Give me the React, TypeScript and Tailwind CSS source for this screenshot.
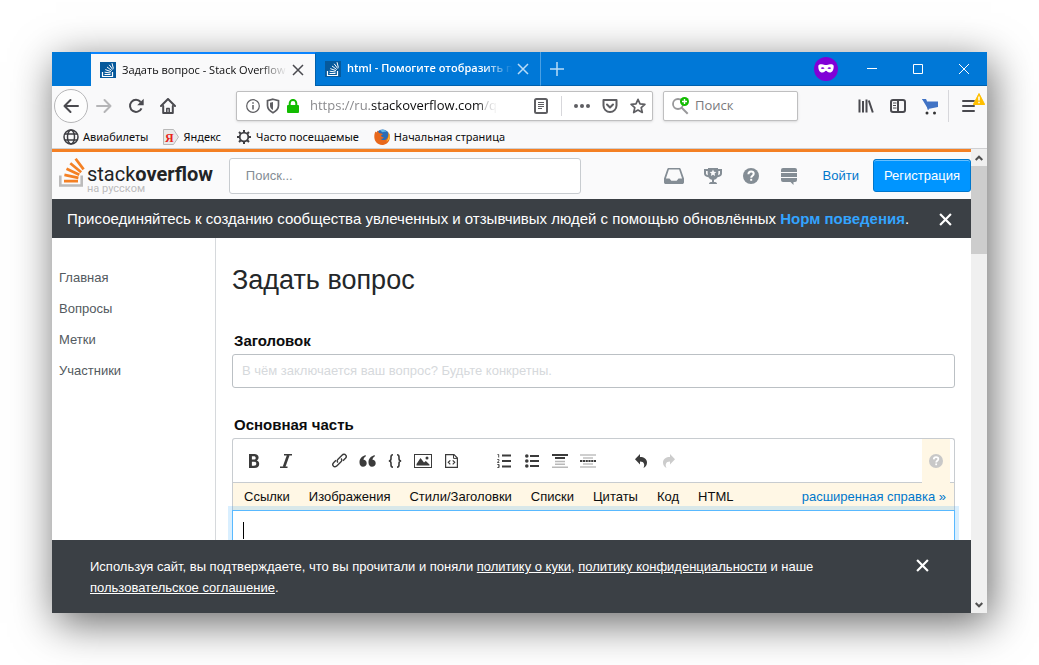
import type { ReactNode } from 'react';

const FlowMark = ({ className }: { className: string }) => (
    <svg viewBox="0 0 16 16" className={className} aria-hidden="true">
        <rect width="16" height="16" fill="#06599c" />
        <g fill="none" stroke="#fff" strokeWidth="1">
            <path d="M2.5 10v4.5h10V10" strokeWidth="1.2" />
            <path d="M4.5 12.5h6M4.6 10.2l6 .8M5.3 7.6l5.6 2M7 5l4.8 3.6M9.2 2.8l3.6 4.8M12 1.2l1.4 5.4" />
        </g>
    </svg>
);

const Logo = () => (
    <a href="#" className="flex shrink-0 items-start self-start pt-[5px]">
        <svg width="26" height="32" viewBox="0 0 26 32" aria-hidden="true">
            <path d="M1.300 18.500v10h21.400v-10" fill="none" stroke="#bcbbbb" strokeWidth="2.600" />
            <g stroke="#f48024" strokeWidth="2.700">
                <path d="M5 24.200h14M5.400 17.900l14 3M7.500 11.800l12.800 6M11.300 6.200l10.900 9M16.600 1.800l8 10.600" />
            </g>
        </svg>
        <span className="flex flex-col pl-0.5 pt-[7px] font-['Roboto',sans-serif]">
            <span className="text-[20px] leading-5 text-[#222426]">
                <span className="font-normal">stack</span>
                <span className="font-bold">overflow</span>
            </span>
            <span className="text-[11px] leading-[10px] text-[#bcbbbb]">на русском</span>
        </span>
    </a>
);

const Cross = ({ size, width = 1.5 }: { size: number; width?: number }) => (
    <svg width={size} height={size} viewBox="0 0 12 12" fill="none" stroke="currentColor" strokeWidth={width} aria-hidden="true">
        <path d="M1 1l10 10M11 1L1 11" />
    </svg>
);

const NavButton = ({ label, children }: { label: string; children: ReactNode }) => (
    <button aria-label={label} className="flex h-8 w-8 shrink-0 items-center justify-center text-[#4a4a4f]">
        {children}
    </button>
);

const TabStrip = () => (
    <div className="flex h-[34px] items-stretch bg-[#0078d7] pl-[39px] text-[11px]">
        <div className="flex w-[225px] items-center border-r border-t-2 border-[#0060ac] border-t-[#0a84ff] bg-[#f9f9fa] pl-[9px] text-[#0c0c0d]">
            <FlowMark className="mr-1.5 size-4 shrink-0" />
            <span className="w-[165px] overflow-hidden whitespace-nowrap [mask-image:linear-gradient(to_left,transparent,black_28px)]">
                Задать вопрос - Stack Overflow
            </span>
            <button aria-label="Закрыть вкладку" className="ml-[5px] text-[#4a4a4f]">
                <Cross size={12} />
            </button>
        </div>
        <div className="flex w-[225px] items-center border-r border-b border-r-[#4ba0e3] border-b-[#0060ac] pl-[9px] text-white">
            <FlowMark className="mr-1.5 size-4 shrink-0" />
            <span className="w-[165px] overflow-hidden whitespace-nowrap font-semibold [mask-image:linear-gradient(to_left,transparent,black_28px)]">
                html - Помогите отобразить по
            </span>
            <button aria-label="Закрыть вкладку" className="ml-[5px] text-[#b8dcf7]">
                <Cross size={12} />
            </button>
        </div>
        <div className="flex flex-1 items-center border-b border-[#0060ac] pl-[9px] text-white">
            <button aria-label="Новая вкладка" className="text-[#b8dcf7]">
                <svg width="14" height="14" viewBox="0 0 14 14" stroke="currentColor" strokeWidth="1.5">
                    <path d="M7 0v14M0 7h14" />
                </svg>
            </button>
            <span className="ml-auto mr-[11px] flex size-6 items-center justify-center rounded-full bg-[#8000d7]">
                <svg width="16" height="9" viewBox="0 0 16 9" aria-hidden="true">
                    <path
                        fill="#fff"
                        fillRule="evenodd"
                        d="M.3 2.2C.3.6 2 .1 4 .3c1.600.2 2.600.8 4 .8S10.400.5 12 .3c2-.2 3.700.3 3.700 1.900 0 3.400-1.200 6.300-4 6.300C9.600 8.500 9 6.700 8 6.700s-1.600 1.800-3.700 1.800c-2.800 0-4-2.900-4-6.300zM2.800 4.300c.8 1 3 1 3.800 0C5.500 2.900 3.600 2.900 2.800 4.300zm6.600 0c.8 1 3 1 3.800 0-.8-1.400-2.700-1.400-3.800 0z"
                    />
                </svg>
            </span>
            <button aria-label="Свернуть" className="flex h-8 w-[46px] items-center justify-center">
                <svg width="10" height="10" viewBox="0 0 10 10" stroke="currentColor"><path d="M0 4.500h10" /></svg>
            </button>
            <button aria-label="Развернуть" className="flex h-8 w-[46px] items-center justify-center">
                <svg width="10" height="10" viewBox="0 0 10 10" stroke="currentColor" fill="none"><path d="M.5.5h9v9h-9z" /></svg>
            </button>
            <button aria-label="Закрыть" className="flex h-8 w-[46px] items-center justify-center">
                <Cross size={12} width={1} />
            </button>
        </div>
    </div>
);

const AddressBar = () => (
    <div className="flex h-[30px] min-w-0 flex-1 items-center rounded-[2px] border border-[#bfbfc0] bg-white pl-[9px] text-[#5e5e62] shadow-sm">
        <svg width="14" height="14" viewBox="0 0 14 14" fill="none" stroke="currentColor" aria-hidden="true">
            <circle cx="7" cy="7" r="6.300" strokeWidth="1.200" />
            <path d="M7 6v4.500M7 3.200v1.600" strokeWidth="1.500" />
        </svg>
        <svg width="14" height="16" viewBox="0 0 14 16" className="ml-1.5" aria-hidden="true">
            <path d="M7 1.200L12.500 2.700v4.800c0 3.200-2.300 5.600-5.500 7.200-3.200-1.600-5.500-4-5.500-7.200V2.700z" fill="none" stroke="currentColor" strokeWidth="1.700" />
            <path d="M7 4v8c-1.800-1-3-2.600-3-4.600V4.800z" fill="currentColor" />
        </svg>
        <svg width="12" height="14" viewBox="0 0 12 14" className="ml-[7px]" aria-hidden="true">
            <rect y="6" width="12" height="8" rx="1" fill="#12bc00" />
            <path d="M2.700 7V4.200a3.300 3.300 0 0 1 6.600 0V7" fill="none" stroke="#12bc00" strokeWidth="2" />
        </svg>
        <label htmlFor="address" className="sr-only">Адрес</label>
        <div className="relative ml-[11px] min-w-0 flex-1 overflow-hidden whitespace-nowrap text-[13px] text-[#8a8a8d] [mask-image:linear-gradient(to_left,transparent_36px,black_58px)]">
            <span>https://ru.</span>
            <span className="text-[#0c0c0d]">stackoverflow.com</span>
            <span>/questions</span>
            <input id="address" className="absolute inset-0 w-full opacity-0" defaultValue="https://ru.stackoverflow.com/questions" />
        </div>
        <button aria-label="Режим чтения" className="mr-[13px]">
            <svg width="14" height="16" viewBox="0 0 14 16" fill="none" stroke="currentColor">
                <rect x="1" y="1" width="12" height="14" rx="1.500" strokeWidth="2" />
                <path d="M4 4.500h6M4 6.500h6M4 8.500h6M4 10.500h4" />
            </svg>
        </button>
        <div className="flex items-center gap-3 border-l border-[#d7d7db] py-0.5 pl-3 pr-[6px]">
            <button aria-label="Действия на странице">
                <svg width="16" height="16" viewBox="0 0 16 16" fill="currentColor">
                    <circle cx="2" cy="8" r="2" /><circle cx="8" cy="8" r="2" /><circle cx="14" cy="8" r="2" />
                </svg>
            </button>
            <button aria-label="Сохранить в Pocket">
                <svg width="16" height="16" viewBox="0 0 16 16" fill="none" stroke="currentColor" strokeWidth="2" strokeLinecap="round" strokeLinejoin="round">
                    <path d="M1.500 2h13v5.500a6.500 6.500 0 0 1-13 0z" />
                    <path d="M5 6.500l3 3 3-3" />
                </svg>
            </button>
            <button aria-label="Добавить в закладки">
                <svg width="16" height="16" viewBox="0 0 16 16" fill="none" stroke="currentColor" strokeWidth="1.700" strokeLinejoin="round">
                    <path d="M8 1.300l2 4.500 4.900.5-3.700 3.300 1.100 4.900L8 12l-4.300 2.500 1.100-4.900L1.100 6.300 6 5.800z" />
                </svg>
            </button>
        </div>
    </div>
);

const Toolbar = () => (
    <div className="flex h-10 items-center bg-[#f9f9fa] pl-[2px]">
        <button aria-label="Назад" className="flex size-[34px] items-center justify-center rounded-full border border-[#b6b6b8] bg-[#fdfdfd] text-[#4a4a4f]">
            <svg width="16" height="16" viewBox="0 0 16 16" fill="none" stroke="currentColor" strokeWidth="2" strokeLinecap="round" strokeLinejoin="round">
                <path d="M15 8H1.500M7.500 2l-6 6 6 6" />
            </svg>
        </button>
        <NavButton label="Вперёд">
            <svg width="16" height="16" viewBox="0 0 16 16" fill="none" stroke="#b5b5b7" strokeWidth="2" strokeLinecap="round" strokeLinejoin="round">
                <path d="M1 8h13.500M8.500 2l6 6-6 6" />
            </svg>
        </NavButton>
        <NavButton label="Обновить">
            <svg width="16" height="16" viewBox="0 0 16 16" fill="none" stroke="currentColor" strokeWidth="2">
                <path d="M13.500 10.300A6 6 0 1 1 12.600 4" />
                <path d="M15.700.8v6.500H9.200z" fill="currentColor" stroke="none" />
            </svg>
        </NavButton>
        <NavButton label="Домой">
            <svg width="16" height="16" viewBox="0 0 16 16" fill="none" stroke="currentColor" strokeWidth="2" strokeLinejoin="round" strokeLinecap="round">
                <path d="M1 8l7-7 7 7" />
                <path d="M3.200 8v7h9.600V8" />
                <path d="M6.800 14.500v-4h2.400v4" strokeWidth="1.500" />
            </svg>
        </NavButton>
        <div className="flex min-w-0 flex-1 items-center gap-[10px] pl-[52px]">
            <AddressBar />
            <div className="flex h-[30px] w-[135px] items-center rounded-[2px] border border-[#bfbfc0] bg-white pl-2 shadow-sm">
                <svg width="18" height="18" viewBox="0 0 18 18" fill="none" className="shrink-0" aria-hidden="true">
                    <circle cx="6" cy="7" r="5" stroke="#98989a" strokeWidth="1.800" />
                    <path d="M9.700 10.700l6 6" stroke="#98989a" strokeWidth="2" />
                    <circle cx="12.500" cy="4.500" r="4.500" fill="#12bc00" />
                    <path d="M12.500 2v5M10 4.500h5" stroke="#fff" strokeWidth="1.400" />
                </svg>
                <input aria-label="Поиск в интернете" placeholder="Поиск" className="ml-[5px] w-full min-w-0 bg-transparent text-[13px] outline-none placeholder:text-[#7a7a7d]" />
            </div>
        </div>
        <div className="flex items-center pl-[52px]">
            <NavButton label="Библиотека">
                <svg width="16" height="16" viewBox="0 0 16 16" stroke="currentColor" strokeWidth="2">
                    <path d="M1.500 1.500v13M5 3v11.500M8.500 1.500v13M10.800 2.500l4 12" />
                </svg>
            </NavButton>
            <NavButton label="Боковая панель">
                <svg width="16" height="16" viewBox="0 0 16 16" fill="none" stroke="currentColor" strokeWidth="2">
                    <rect x="1" y="2" width="14" height="12" rx="2" />
                    <path d="M8 2v12" />
                    <path d="M3 5h3.500M3 7.500h3M3 10h3.500" strokeWidth="1" />
                </svg>
            </NavButton>
            <NavButton label="Покупки">
                <svg width="16" height="17" viewBox="0 0 16 17" aria-hidden="true">
                    <path d="M0 1h4l.8 2.500H16V9L6 11z" fill="#4173c4" />
                    <path d="M.5 1.500h3.200l2.600 10.500" fill="none" stroke="#4173c4" />
                    <circle cx="5" cy="15" r="1.500" fill="#333" /><circle cx="12.500" cy="15" r="1.500" fill="#333" />
                </svg>
            </NavButton>
            <div className="relative ml-0.5 border-l border-[#d7d7db] pl-1 pr-0.5">
                <NavButton label="Меню">
                    <svg width="14" height="14" viewBox="0 0 14 14" stroke="currentColor" strokeWidth="2" strokeLinecap="round">
                        <path d="M1 2h11M1 7h11M1 12h11" />
                    </svg>
                </NavButton>
                <svg width="12" height="12" viewBox="0 0 12 12" className="absolute right-[2px] top-[3px]" aria-hidden="true">
                    <path d="M6 .5L11.700 11.500H.3z" fill="#ffbf00" stroke="#ffbf00" strokeLinejoin="round" />
                    <path d="M6 3.500v4M6 8.700v1.500" stroke="#fff" strokeWidth="1.500" />
                </svg>
            </div>
        </div>
    </div>
);

const Bookmarks = () => (
    <div className="flex h-[23px] items-center gap-[15px] border-b border-[#d0d0d2] bg-[#f9f9fa] pl-[11px] font-['Noto_Sans',sans-serif] text-[11px] text-[#0c0c0d]">
        <a href="#" className="flex items-center gap-1">
            <svg width="16" height="16" viewBox="0 0 16 16" fill="none" stroke="#3d3d42" strokeWidth="1.500" aria-hidden="true">
                <circle cx="8" cy="8" r="7" /><ellipse cx="8" cy="8" rx="3.500" ry="7" />
                <path d="M2 5h12M2 11h12" strokeWidth="1.300" />
            </svg>
            Авиабилеты
        </a>
        <a href="#" className="flex items-center gap-1">
            <svg width="16" height="16" viewBox="0 0 16 16" aria-hidden="true">
                <path d="M.5.5h10L15.500 8l-5 7.500H.5z" fill="#e9e9e9" stroke="#b9b9b9" />
                <text x="2" y="12.500" fontSize="12" fontWeight="700" fill="#e8221a" fontFamily="Liberation Serif">Я</text>
            </svg>
            Яндекс
        </a>
        <a href="#" className="flex items-center gap-1">
            <svg width="16" height="16" viewBox="0 0 16 16" fill="none" stroke="#3d3d42" aria-hidden="true">
                <circle cx="8" cy="8" r="4.300" strokeWidth="1.800" />
                <path d="M8 1v2.500M8 12.500V15M1 8h2.500M12.500 8H15M3 3l1.800 1.800M11.200 11.200L13 13M3 13l1.800-1.800M11.200 4.800L13 3" strokeWidth="2" />
            </svg>
            Часто посещаемые
        </a>
        <a href="#" className="flex items-center gap-1">
            <svg width="16" height="16" viewBox="0 0 16 16" aria-hidden="true">
                <circle cx="8.500" cy="7.500" r="7" fill="#2b6cb5" />
                <path d="M6 1.500c2-1.200 5-.8 6.500.8-1 1-3 .2-4 1z" fill="#62b6e8" />
                <path d="M1.500 2.500C0 5-.2 9.500 1.500 12.200 3.500 15.500 7 16.300 10 15.700c3.500-.7 6-4 5.900-7.700 0-2-.7-3.600-1.600-4.700.4 2.700-.3 5.200-1.800 6.600-2 1.800-4.700 1.500-6-.2 1.300.2 2.700-.3 3.500-1.300-1.500 0-2.500-.7-3-1.600.3-.9 1.300-.9 2-1.500-.9-.7-2-1-3.200-1C4.500 3.700 4 2.700 4 1.500c-.8.5-1.300 1.200-1.500 2z" fill="#e8681c" />
                <path d="M14.300 3.300c1 3.500.2 7-2.200 9.200 2.200-.6 3.400-2.700 3.600-4.500.1-1.800-.5-3.500-1.400-4.700z" fill="#ffc62e" />
            </svg>
            Начальная страница
        </a>
    </div>
);

const SiteHeader = () => (
    <header className="flex h-[50px] items-center border-t-[3px] border-[#f48024] bg-[#fafafb] pl-[7px]">
        <Logo />
        <label htmlFor="site-search" className="sr-only">Поиск по сайту</label>
        <input
            id="site-search"
            placeholder="Поиск..."
            className="ml-4 h-9 min-w-0 flex-1 rounded-[3px] border border-[#c8ccd0] bg-white px-4 text-[13px] outline-none placeholder:text-[#848d95]"
        />
        <nav className="flex items-center pl-[74px] text-[#848d95]">
            <button aria-label="Входящие" className="flex w-[38px] justify-center">
                <svg width="20" height="18" viewBox="0 0 20 18" fill="currentColor">
                    <path fillRule="evenodd" d="M4.800 1h10.400c.8 0 1.400.5 1.600 1.200L20 11.500v3.700c0 1-.8 1.800-1.800 1.800H1.800C.8 17 0 16.200 0 15.200v-3.700L3.200 2.200C3.400 1.500 4 1 4.800 1zM4.900 2.600L1.900 11.500h3.600l1.800 2.300h5.400l1.800-2.300h3.600l-3-8.900z" />
                </svg>
            </button>
            <button aria-label="Достижения" className="flex w-10 justify-center">
                <svg width="18" height="18" viewBox="0 0 18 18" fill="currentColor">
                    <path fillRule="evenodd" d="M4 1h10v1h4v4.500c0 2-1.700 3.500-4.500 3.700-.8 1.300-2 2.200-3.500 2.500V15c2 0 3 .6 3 2H5c0-1.400 1-2 3-2v-2.300c-1.500-.3-2.700-1.200-3.500-2.500C1.700 10 0 8.500 0 6.500V2h4zM2 4v2.500c0 .9.700 1.500 1.800 1.800L3.600 4zm14 0h-1.600l-.2 4.300c1.100-.3 1.800-.9 1.800-1.800zM9 2.600l-1 2.200-2.400.2 1.800 1.600L6.900 9 9 7.700 11.100 9l-.5-2.400L12.400 5 10 4.800z" />
                </svg>
            </button>
            <button aria-label="Справка" className="flex w-9 justify-center">
                <QuestionDisc size={16} />
            </button>
            <button aria-label="Сайты Stack Exchange" className="flex w-10 justify-center">
                <svg width="16" height="18" viewBox="0 0 16 18" fill="currentColor">
                    <path d="M0 3a2 2 0 0 1 2-2h12a2 2 0 0 1 2 2v2H0zM0 6h16v4H0z" />
                    <path d="M0 11h16v2a2 2 0 0 1-2 2h-1.500v3L9.500 15H2a2 2 0 0 1-2-2z" />
                </svg>
            </button>
        </nav>
        <a href="#" className="ml-[14px] text-[13px] text-[#0077cc]">Войти</a>
        <button className="ml-[14px] h-[33px] rounded-[3px] border border-[#0077cc] bg-[#0095ff] px-[10px] text-[13px] text-white shadow-[inset_0_1px_0_#66bfff]">
            Регистрация
        </button>
    </header>
);

const QuestionDisc = ({ size }: { size: number }) => (
    <svg width={size} height={size} viewBox="0 0 16 16" aria-hidden="true">
        <circle cx="8" cy="8" r="8" fill="currentColor" />
        <path d="M5.400 6.200c.1-1.700 1.100-2.600 2.700-2.600s2.600.9 2.600 2.200c0 1.900-2.500 1.900-2.500 3.900" fill="none" stroke="#fff" strokeWidth="2" />
        <rect x="7.200" y="10.800" width="2" height="2" fill="#fff" />
    </svg>
);

const EditorButton = ({ label, children }: { label: string; children: ReactNode }) => (
    <button type="button" aria-label={label} className="flex h-7 w-7 items-center justify-center text-[#3b3b3b]">
        {children}
    </button>
);

const EditorToolbar = () => (
    <div className="flex h-11 items-stretch justify-between border-b border-[#c8ccd0] pl-[7px] pr-1">
        <div className="flex items-center gap-[25px]">
            <div className="flex gap-1">
                <EditorButton label="Полужирный">
                    <svg width="12" height="14" viewBox="0 0 12 14" fill="currentColor">
                        <path fillRule="evenodd" d="M1 0h5.200C9 0 10.600 1.300 10.600 3.500c0 1.400-.7 2.500-1.900 3C10.300 7 11.200 8.200 11.200 9.900c0 2.600-1.800 4.100-4.700 4.100H1zM3.900 2.300v3.300h1.800c1.300 0 2-.6 2-1.700s-.7-1.600-2-1.600zm0 5.500v3.900h2.200c1.400 0 2.200-.7 2.200-2s-.8-1.900-2.200-1.900z" />
                    </svg>
                </EditorButton>
                <EditorButton label="Курсив">
                    <svg width="12" height="14" viewBox="0 0 12 14" fill="none" stroke="currentColor">
                        <path d="M4 .8h8M0 13.200h7.500" strokeWidth="1.400" />
                        <path d="M8.300 1L4 13" strokeWidth="2.600" />
                    </svg>
                </EditorButton>
            </div>
            <div className="flex">
                <EditorButton label="Ссылка">
                    <svg width="15" height="15" viewBox="0 0 15 15" fill="none" stroke="currentColor" strokeWidth="1.400">
                        <path d="M6 9.500C4.900 8.500 5 7.200 6 6.200l4-4c1.200-1.200 2.800-1.200 3.600-.3.900.9.900 2.200-.2 3.400L11 7.700" />
                        <path d="M9 5.500c1.100 1 1 2.300 0 3.300l-4 4c-1.200 1.200-2.800 1.200-3.600.3-.9-.9-.9-2.200.2-3.400L4 7.300" />
                    </svg>
                </EditorButton>
                <EditorButton label="Цитата">
                    <svg width="17" height="12" viewBox="0 0 17 12" fill="currentColor">
                        <path d="M6.800.3C2.800 1 .5 3.700.5 7.500.5 10 1.900 11.800 4 11.800s3.700-1.500 3.700-3.600S6.300 4.800 4.500 4.700C4.700 3.200 5.500 2 7 1.300zM15.800.3c-4 .7-6.300 3.400-6.300 7.200 0 2.500 1.400 4.300 3.500 4.300s3.700-1.500 3.700-3.600-1.400-3.400-3.200-3.500c.2-1.500 1-2.700 2.500-3.400z" />
                    </svg>
                </EditorButton>
                <EditorButton label="Код">
                    <svg width="14" height="14" viewBox="0 0 14 14" fill="none" stroke="currentColor" strokeWidth="1.600">
                        <path d="M5 .8C3.200.8 3 1.500 3 3v1.800C3 6.200 2.400 7 .8 7 2.400 7 3 7.800 3 9.200V11c0 1.500.2 2.200 2 2.200M9 .8c1.800 0 2 .7 2 2.200v1.800C11 6.200 11.600 7 13.200 7c-1.600 0-2.200.8-2.200 2.200V11c0 1.500-.2 2.200-2 2.200" />
                    </svg>
                </EditorButton>
                <EditorButton label="Изображение">
                    <svg width="18" height="14" viewBox="0 0 18 14">
                        <rect x=".5" y=".5" width="17" height="13" fill="none" stroke="currentColor" />
                        <path d="M2.500 11.500v-1.500l4-6 3.500 4.500 1.800-1.500 3.700 3.500v1z" fill="currentColor" />
                        <circle cx="13" cy="4" r="1.500" fill="currentColor" />
                    </svg>
                </EditorButton>
                <EditorButton label="Фрагмент кода">
                    <svg width="13" height="14" viewBox="0 0 13 14" fill="none" stroke="currentColor">
                        <path d="M.6.6h8.400l3.400 3.400v9.400H.6z" strokeWidth="1.200" />
                        <path d="M8.500.6v3.800h3.900" strokeWidth="1" />
                        <path d="M5.300 6.300l-2 2 2 2M7.700 6.300l2 2-2 2" strokeWidth="1.200" />
                    </svg>
                </EditorButton>
            </div>
            <div className="flex">
                <EditorButton label="Нумерованный список">
                    <svg width="14" height="14" viewBox="0 0 14 14" stroke="currentColor" fill="none">
                        <path d="M5 1.500h9M5 7h9M5 12.500h9" strokeWidth="1.800" />
                        <path d="M.5.5h1.200v3M.3 5.500h1.600v1.300L.3 8.500h2M.3 10.500h1.800v1.500H1M2.100 12v1.500H.3" strokeWidth=".9" />
                    </svg>
                </EditorButton>
                <EditorButton label="Маркированный список">
                    <svg width="14" height="14" viewBox="0 0 14 14" stroke="currentColor">
                        <path d="M5 2h9M5 7h9M5 12h9" strokeWidth="2" />
                        <g fill="currentColor" stroke="none"><circle cx="1.800" cy="2" r="1.800" /><circle cx="1.800" cy="7" r="1.800" /><circle cx="1.800" cy="12" r="1.800" /></g>
                    </svg>
                </EditorButton>
                <EditorButton label="Заголовок">
                    <svg width="16" height="14" viewBox="0 0 16 14" strokeWidth="2">
                        <path d="M0 1h16M3 4h10" stroke="currentColor" />
                        <path d="M3 7.500h10M3 10.300h10M0 13.200h16" stroke="#b9b9b9" strokeWidth="1.500" />
                    </svg>
                </EditorButton>
                <EditorButton label="Горизонтальная линия">
                    <svg width="16" height="14" viewBox="0 0 16 14" strokeWidth="1.600">
                        <path d="M0 1h16M3 4h10M3 10h10M0 13h16" stroke="#c0c0c0" />
                        <path d="M0 7h16" stroke="currentColor" strokeWidth="2" strokeDasharray="2.200 .6" />
                    </svg>
                </EditorButton>
            </div>
            <div className="flex">
                <EditorButton label="Отменить">
                    <svg width="12" height="14" viewBox="0 0 12 14" fill="currentColor">
                        <path d="M5 0v3c4 0 7 2 7 5.500 0 2.500-1.200 4.300-3.500 5.500C10 11 9.500 7.500 5 7.500v3L0 5.200z" />
                    </svg>
                </EditorButton>
                <EditorButton label="Повторить">
                    <svg width="12" height="14" viewBox="0 0 12 14" fill="#ccc">
                        <path d="M7 0v3C3 3 0 5 0 8.500 0 11 1.200 12.800 3.500 14 2 11 2.500 7.500 7 7.500v3l5-5.300z" />
                    </svg>
                </EditorButton>
            </div>
        </div>
        <button type="button" aria-label="Справка по разметке" className="-mb-px flex w-7 items-center justify-center bg-[#fff7e5] text-[#c8c8c8]">
            <QuestionDisc size={14} />
        </button>
    </div>
);

const helpTopics = ['Ссылки', 'Изображения', 'Стили/Заголовки', 'Списки', 'Цитаты', 'Код', 'HTML'];

const AskForm = () => (
    <form className="min-w-0 flex-1 border-l border-[#d6d9dc] px-4 pt-[25px]">
        <h1 className="text-[27px] leading-[34px] text-[#242729]">Задать вопрос</h1>
        <label htmlFor="title" className="mt-8 mb-0.5 block pl-0.5 text-[15px] font-bold leading-[23px] text-[#0c0d0e]">
            Заголовок
        </label>
        <input
            id="title"
            placeholder="В чём заключается ваш вопрос? Будьте конкретны."
            className="block h-[34px] w-full rounded-[3px] border border-[#bbc0c4] px-[9px] pb-0.5 text-[13px] outline-none placeholder:text-[#d6d9dc]"
        />
        <label htmlFor="body" className="mt-[25px] mb-0.5 block pl-0.5 text-[15px] font-bold leading-[23px] text-[#0c0d0e]">
            Основная часть
        </label>
        <div className="rounded-t-[3px] border-x border-t border-[#c8ccd0]">
            <EditorToolbar />
            <div className="flex h-[27px] items-center justify-between bg-[#fff7e5] pl-[11px] pr-2 text-[13px]">
                <div className="flex gap-[19px] whitespace-nowrap text-[#0c0d0e]">
                    {helpTopics.map((topic) => (
                        <button type="button" key={topic}>{topic}</button>
                    ))}
                </div>
                <a href="#" className="whitespace-nowrap text-[#0077cc]">расширенная справка »</a>
            </div>
        </div>
        <div className="relative">
            <textarea
                id="body"
                className="block h-52 w-full resize-none border border-[#59b9ff] bg-white p-[10px] text-[13px] shadow-[0_0_0_4px_rgba(0,149,255,0.15)] outline-none"
            />
            <span className="absolute left-[11px] top-3 h-[17px] w-px bg-black" />
        </div>
    </form>
);

const ScrollBar = () => (
    <div className="flex w-4 shrink-0 flex-col items-center bg-[#f0f0f0] text-[#505050]">
        <button aria-label="Прокрутить вверх" className="flex h-[17px] w-full items-center justify-center">
            <svg width="8" height="6" viewBox="0 0 8 6" fill="none" stroke="currentColor" strokeWidth="2"><path d="M.7 5L4 1.700 7.300 5" /></svg>
        </button>
        <div className="h-[88px] w-full bg-[#cdcdcd]" />
        <button aria-label="Прокрутить вниз" className="mt-auto flex h-[17px] w-full items-center justify-center">
            <svg width="8" height="6" viewBox="0 0 8 6" fill="none" stroke="currentColor" strokeWidth="2"><path d="M.7 1L4 4.300 7.300 1" /></svg>
        </button>
    </div>
);

const App = () => {
    const links = ['Главная', 'Вопросы', 'Метки', 'Участники'];

    return (
        <div className="flex h-screen bg-white p-[52px] font-['Liberation_Sans',Arial,sans-serif]">
            <div className="flex min-w-0 flex-1 flex-col bg-white shadow-[4px_10px_40px_rgba(0,0,0,0.6)]">
                {/* Browser chrome */}
                <div className="shrink-0 font-['Open_Sans','Noto_Sans',sans-serif]">
                    <TabStrip />
                    <Toolbar />
                    <Bookmarks />
                </div>

                <div className="flex min-h-0 flex-1">
                    <div className="flex min-w-0 flex-1 flex-col">
                        <SiteHeader />
                        <div className="flex h-[39px] shrink-0 items-center justify-between bg-[#3b4045] pl-[15px] pr-[19px] pt-px text-[15px] text-white">
                            <p className="whitespace-nowrap">
                                Присоединяйтесь к созданию сообщества увлеченных и отзывчивых людей с помощью обновлённых{' '}
                                <a href="#" className="font-bold text-[#33a4ff]">Норм поведения</a>.
                            </p>
                            <button aria-label="Скрыть объявление"><Cross size={13} width={2} /></button>
                        </div>

                        <main className="flex min-h-0 flex-1 overflow-hidden">
                            <nav className="w-[163px] shrink-0 pl-[7px] pt-6">
                                {links.map((link) => (
                                    <a href="#" key={link} className="block text-[13px] leading-[31px] text-[#535a60]">{link}</a>
                                ))}
                            </nav>
                            <AskForm />
                        </main>

                        {/* Cookie notice */}
                        <footer className="flex h-[73px] shrink-0 items-start justify-between bg-[#3b4045] pl-[38px] pr-[42px] pt-4 text-[13px] leading-[21px] text-white">
                            <p className="pr-20">
                                Используя сайт, вы подтверждаете, что вы прочитали и поняли{' '}
                                <a href="#" className="underline">политику о куки</a>,{' '}
                                <a href="#" className="underline">политику конфиденциальности</a> и наше{' '}
                                <a href="#" className="underline">пользовательское соглашение</a>.
                            </p>
                            <button aria-label="Закрыть уведомление" className="pt-[3px]"><Cross size={13} width={2} /></button>
                        </footer>
                    </div>
                    <ScrollBar />
                </div>
            </div>
        </div>
    );
};

export default App;
